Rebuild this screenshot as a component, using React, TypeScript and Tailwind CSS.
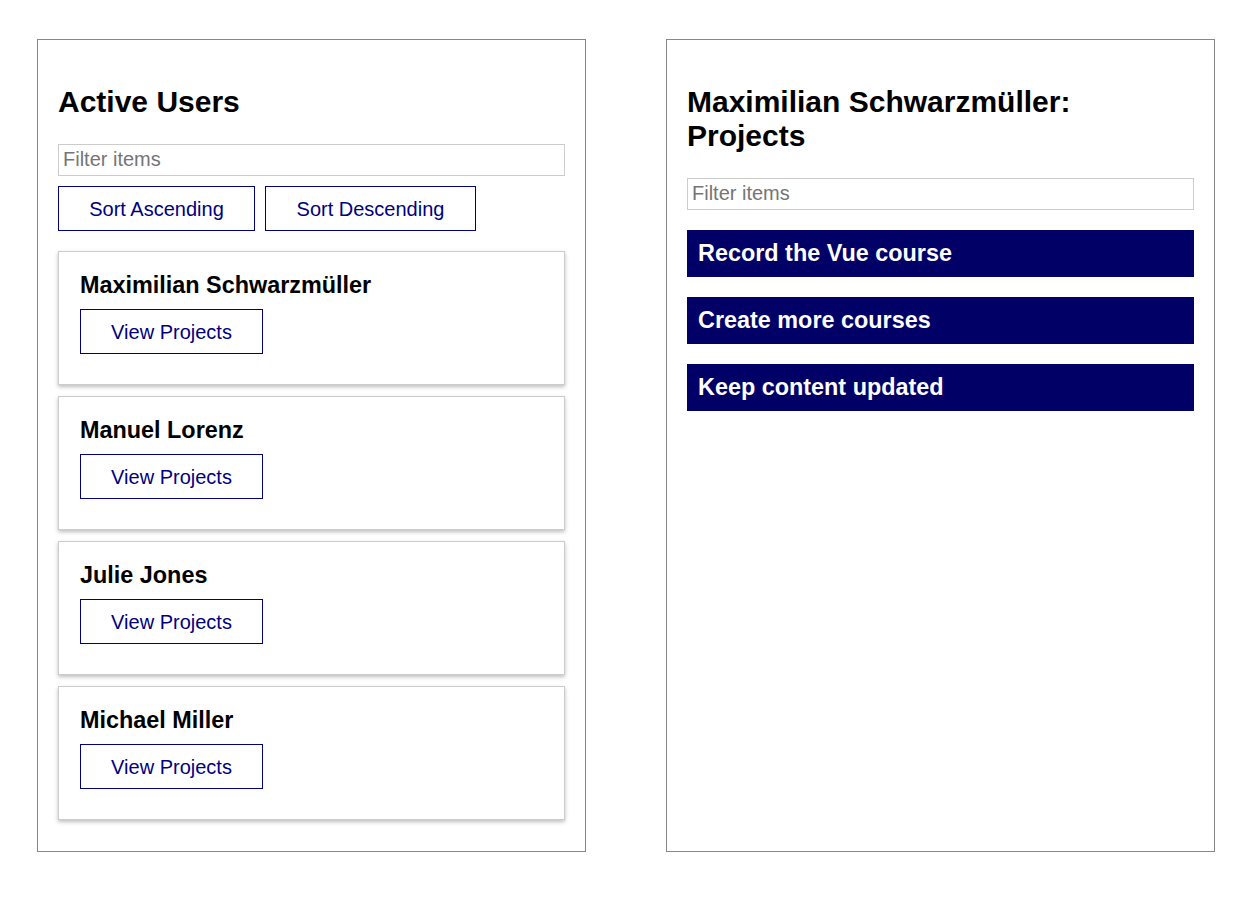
import React from "react";

const users = ["Maximilian Schwarzmüller", "Manuel Lorenz", "Julie Jones", "Michael Miller"];
const projects = ["Record the Vue course", "Create more courses", "Keep content updated"];

export default function App() {
  return (
    <div
      className="min-h-[905px] bg-white text-black text-[20px]"
      style={{ fontFamily: '"Liberation Sans", Arial, sans-serif' }}
    >
      <div className="flex justify-between px-[37px] pt-[39px]">
        <section className="w-[549px] border border-[#888] p-5 pb-[31px]">
          <h2 className="mt-[25px] mb-[25px] text-[30px] font-bold leading-[34px]">Active Users</h2>
          <input
            className="block h-[32px] w-full border border-[#ccc] px-[4px] pb-[1px] text-[20px] placeholder:text-[#757575] outline-none"
            placeholder="Filter items"
          />
          <div className="mt-[10px] flex gap-[10px]">
            <button className="h-[45px] w-[197px] border border-[#000080] pt-[1px] text-[20px] leading-[23px] text-[#000080] bg-white">
              Sort Ascending
            </button>
            <button className="h-[45px] w-[211px] border border-[#000080] pt-[1px] text-[20px] leading-[23px] text-[#000080] bg-white">
              Sort Descending
            </button>
          </div>
          <ul className="mt-[20px] flex flex-col gap-[11px]">
            {users.map((u) => (
              <li
                key={u}
                className="border border-[#ccc] bg-white px-[21px] pt-[20px] pb-[30px] shadow-[0_2px_4px_rgba(0,0,0,0.26)]"
              >
                <h3 className="text-[23.4px] font-bold leading-[27px]">{u}</h3>
                <button className="mt-[10px] h-[45px] w-[183px] border border-[#000080] pt-[1px] text-[20px] leading-[23px] text-[#000080] bg-white">
                  View Projects
                </button>
              </li>
            ))}
          </ul>
        </section>
        <section className="w-[549px] border border-[#888] p-5">
          <h2 className="mt-[25px] mb-[25px] text-[30px] font-bold leading-[34px] pr-[100px]">
            Maximilian Schwarzmüller: Projects
          </h2>
          <input
            className="block h-[32px] w-full border border-[#ccc] px-[4px] pb-[1px] text-[20px] placeholder:text-[#757575] outline-none"
            placeholder="Filter items"
          />
          <ul className="mt-[20px] flex flex-col gap-[20px]">
            {projects.map((p) => (
              <li
                key={p}
                className="flex h-[47px] items-center bg-[#000066] px-[11px] text-[23.4px] font-bold leading-[27px] text-white"
              >
                {p}
              </li>
            ))}
          </ul>
        </section>
      </div>
    </div>
  );
}
